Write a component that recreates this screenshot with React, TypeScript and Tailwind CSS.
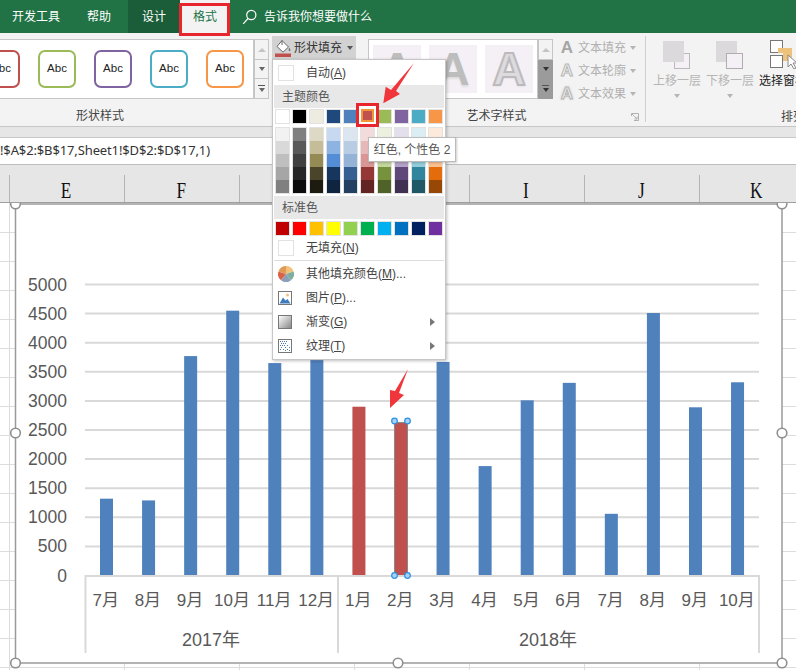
import React from "react";

const themeTop = ["#ffffff", "#000000", "#eeece1", "#1f497d", "#4f81bd", "#c0504d", "#9bbb59", "#8064a2", "#4bacc6", "#f79646"];
const tints = [
  ["#f2f2f2", "#d9d9d9", "#bfbfbf", "#a6a6a6", "#808080"],
  ["#7f7f7f", "#595959", "#404040", "#262626", "#0d0d0d"],
  ["#ddd9c4", "#c4bd97", "#948a54", "#4a452a", "#1d1b10"],
  ["#c6d9f0", "#8db3e2", "#538dd5", "#17365d", "#0f243e"],
  ["#dce6f1", "#b8cce4", "#95b3d7", "#366092", "#244061"],
  ["#f2dcdb", "#e6b8b7", "#d99694", "#953735", "#632523"],
  ["#ebf1de", "#d8e4bc", "#c3d69b", "#76923c", "#4f6228"],
  ["#e4dfec", "#ccc1da", "#b3a2c7", "#5f497a", "#3f3151"],
  ["#daeef3", "#b7dee8", "#92cddc", "#31859c", "#205867"],
  ["#fdeada", "#fbd5b5", "#fac08f", "#e46c0a", "#974806"],
];
const standard = ["#c00000", "#ff0000", "#ffc000", "#ffff00", "#92d050", "#00b050", "#00b0f0", "#0070c0", "#002060", "#7030a0"];
const shapeColors = ["#c0504d", "#9bbb59", "#8064a2", "#4bacc6", "#f79646"];
const values = [1320, 1290, 3770, 4550, 3650, 3700, 2900, 2630, 3670, 1880, 3010, 3310, 1060, 4510, 2890, 3320];
const cats = ["7月", "8月", "9月", "10月", "11月", "12月", "1月", "2月", "3月", "4月", "5月", "6月", "7月", "8月", "9月", "10月"];
const ticks = [0, 500, 1000, 1500, 2000, 2500, 3000, 3500, 4000, 4500, 5000];
const rowLines = Array.from({ length: 16 }, (_, i) => 232 + i * 29);
const colLines = [124.5, 239.5, 354.5, 469.5, 584.5, 699.5];
const handles: [number, number][] = [[15.5, 204], [782, 204], [15.5, 433], [782, 433], [15.5, 663], [398, 663], [782, 663]];
const yOf = (v: number) => 575.5 - (v / 5000) * 291;

function Caret({ className }: { className: string }) {
  return <span className={`inline-block w-0 h-0 border-x-[3.5px] border-x-transparent border-t-[4px] ${className}`} />;
}

function ScrollButtons({ dark }: { dark?: boolean }) {
  const lower = dark ? "bg-[#9b9b9b] border-[#9b9b9b]" : "bg-[#f3f3f3] border-[#c6c6c6]";
  const mark = dark ? "border-t-[#333333]" : "border-t-[#666666]";
  return (
    <div className="w-[15px] h-[60px] flex flex-col">
      <div className="h-[21px] bg-[#f3f3f3] border border-[#c6c6c6] flex items-center justify-center">
        <span className="inline-block w-0 h-0 border-x-[4px] border-x-transparent border-b-[4px] border-b-[#c4c4c4]" />
      </div>
      <div className={`h-[19px] border-x border-b flex items-center justify-center ${lower}`}>
        <Caret className={mark} />
      </div>
      <div className={`h-[20px] border-x border-b flex flex-col items-center justify-center gap-[2px] ${lower}`}>
        <span className="w-[7px] h-px bg-[#555555]" />
        <Caret className={mark} />
      </div>
    </div>
  );
}

function TextOption({ label, kind }: { label: string; kind: number }) {
  const icon =
    kind === 0
      ? "text-[#a6a6a6]"
      : kind === 1
      ? "text-[#f3f3f3] [-webkit-text-stroke:1px_#b5b5b5]"
      : "text-[#ededed] [-webkit-text-stroke:1px_#b5b5b5] [text-shadow:0_0_3px_#bbbbbb]";
  return (
    <div className="h-[23px] flex items-center">
      <span className={`w-[14px] text-center text-[17px] leading-none font-bold font-['Liberation_Sans',sans-serif] ${icon}`}>A</span>
      <span className="ml-[4px] text-[12px] text-[#b0b0b0]">{label}</span>
      <Caret className="ml-[4px] border-t-[#b5b5b5]" />
    </div>
  );
}

function MenuRow({ icon, arrow, children }: { icon: React.ReactNode; arrow?: boolean; children: React.ReactNode }) {
  return (
    <div className="h-[24px] flex items-center relative">
      <span className="w-[32px] flex justify-start pl-[4px]">{icon}</span>
      <span className="text-[12px] text-[#444444]">{children}</span>
      {arrow && <span className="absolute right-[9px] top-[8px] w-0 h-0 border-y-[4px] border-y-transparent border-l-[5px] border-l-[#777777]" />}
    </div>
  );
}

function Swatch({ c }: { c: string }) {
  return <span className="block w-[15px] h-[15px] border border-[#e2e2e2]" style={{ background: c }} />;
}

export default function App() {
  return (
    <div className="w-[796px] h-[670px] overflow-hidden relative flex flex-col bg-white font-['Liberation_Sans','Noto_Sans_CJK_SC',sans-serif]">
      {/* Title tabs */}
      <div className="h-[33px] shrink-0 bg-[#217346] flex items-center text-[12px] text-white">
        <span className="ml-[12px]">开发工具</span>
        <span className="ml-[27px]">帮助</span>
        <span className="ml-[17px] w-[52px] h-[33px] bg-[#1b5d38] flex items-center justify-center">设计</span>
        <span className="w-[50px] h-[33px] bg-[#f3f3f3] text-[#217346] flex items-center justify-center">格式</span>
        <svg className="ml-[12px]" width="15" height="16" viewBox="0 0 15 16" fill="none" stroke="#ffffff" strokeWidth="1.2">
          <circle cx="9.3" cy="6" r="4.6" />
          <path d="M6 9.5 1.2 14.8" />
        </svg>
        <span className="ml-[7px] text-[#ffffff]">告诉我你想要做什么</span>
      </div>

      {/* Ribbon */}
      <div className="h-[94px] shrink-0 bg-[#f3f3f3] border-b border-[#c6c6c6] flex overflow-hidden">
        <div className="w-[272px] shrink-0 flex flex-col pt-[6px]">
          <div className="flex h-[60px] w-[269px]">
            <div className="w-[254px] bg-white border-y border-r border-[#c6c6c6] overflow-hidden flex items-center gap-[18px] pl-0">
              {shapeColors.map((c, i) => (
                <div
                  key={c}
                  className={`w-[38px] h-[38px] shrink-0 rounded-[7px] border-2 bg-white flex items-center justify-center text-[11.5px] text-[#222222] ${i === 0 ? "ml-[-18px]" : ""}`}
                  style={{ borderColor: c }}
                >
                  Abc
                </div>
              ))}
            </div>
            <ScrollButtons />
          </div>
          <div className="h-[27px] pt-[7px] flex items-center justify-center text-[12px] text-[#444444] pr-[72px]">形状样式</div>
        </div>

        <div className="w-[96px] shrink-0 pt-[3px]">
          <div className="w-[84px] h-[24px] bg-[#d2d2d2] flex items-center pl-[3px]">
            <svg width="17" height="18" viewBox="0 0 17 18">
              <path d="M7 1.5 13.5 8 8 13.2 2 7.5Z" fill="#ffffff" stroke="#666666" strokeWidth="1" />
              <path d="M7 1.5V6" stroke="#666666" fill="none" />
              <path d="M14 8.5c1.3 1.6 1.8 2.6 1.300 3.300-.6.6-1.600.2-1.700-.8Z" fill="#777777" />
              <rect x="0" y="14.5" width="16" height="3.5" fill="#c0504d" />
            </svg>
            <span className="ml-[2px] text-[12px] text-[#333333]">形状填充</span>
            <Caret className="ml-[5px] border-t-[#555555]" />
          </div>
        </div>

        <div className="w-[185px] shrink-0 flex flex-col pt-[6px]">
          <div className="flex h-[60px]">
            <div className="w-[170px] bg-white border border-[#c6c6c6] flex items-center gap-[8px] pl-[4px]">
              {[0, 1, 2].map((i) => (
                <div key={i} className="w-[48px] h-[48px] bg-[#f4f0f6] flex items-center justify-center overflow-hidden">
                  <span
                    className={`text-[46px] leading-none font-bold ${
                      i === 2
                        ? "text-[#dedbde] [-webkit-text-stroke:2px_#bdbabd] [text-shadow:0_1px_2px_#cccccc]"
                        : "text-[#bdbdbd] [text-shadow:0_2px_2px_#dddddd]"
                    }`}
                  >
                    A
                  </span>
                </div>
              ))}
            </div>
            <ScrollButtons dark />
          </div>
          <div className="h-[27px] pt-[7px] flex items-center justify-center text-[12px] text-[#444444] pl-[72px]">艺术字样式</div>
        </div>

        <div className="w-[93px] shrink-0 border-r border-[#cfcfcf] mt-[3px] mb-[4px] pl-[7px] relative">
          <TextOption label="文本填充" kind={0} />
          <TextOption label="文本轮廓" kind={1} />
          <TextOption label="文本效果" kind={2} />
          <svg className="absolute right-[6px] bottom-[1px]" width="8" height="8" viewBox="0 0 8 8" fill="none" stroke="#b0b0b0">
            <path d="M.5 3V.5H7.5V7.5H3" />
            <path d="M1 1 6 6M3.500 6H6V3.500" />
          </svg>
        </div>

        <div className="flex pl-[7px] gap-[5px] pt-[8px] min-w-0">
          <div className="w-[48px] flex flex-col items-center text-[12px] text-[#b5b5b5]">
            <svg width="28" height="28" viewBox="0 0 28 28" className="shrink-0">
              <rect x="11.5" y="12.5" width="15" height="15" fill="#f4f0f6" stroke="#bdb8bd" />
              <rect x="0" y="0" width="21" height="21" fill="#dcd9dc" />
            </svg>
            <span className="mt-[3px] whitespace-nowrap leading-[18px]">上移一层</span>
            <Caret className="mt-[4px] border-t-[#b5b5b5]" />
          </div>
          <div className="w-[48px] flex flex-col items-center text-[12px] text-[#b5b5b5]">
            <svg width="28" height="28" viewBox="0 0 28 28" className="shrink-0">
              <rect x="0" y="0" width="21" height="21" fill="#dcd9dc" />
              <rect x="10.5" y="12.5" width="16" height="15" fill="#f4f0f6" stroke="#b0acb0" />
            </svg>
            <span className="mt-[3px] whitespace-nowrap leading-[18px]">下移一层</span>
            <Caret className="mt-[4px] border-t-[#b5b5b5]" />
          </div>
          <div className="w-[48px] flex flex-col items-start text-[12px] text-[#222222] relative">
            <svg width="36" height="29" viewBox="0 0 36 29" className="shrink-0 ml-[10px] mt-[-1px]">
              <rect x="1.5" y="0.5" width="12" height="12" fill="#ffffff" stroke="#777777" />
              <rect x="1.5" y="15.5" width="12" height="12" fill="#ffffff" stroke="#777777" />
              <rect x="9" y="8" width="14" height="5" fill="#ecc27c" />
              <rect x="14" y="8" width="9" height="13" fill="#ecc27c" />
              <path d="M19 15v12l3-3 3 5 2-1-3-5h4Z" fill="#ffffff" stroke="#888888" />
            </svg>
            <span className="mt-[3px] whitespace-nowrap leading-[18px]">选择窗格</span>
            <span className="absolute left-[22px] top-[67px] whitespace-nowrap text-[#444444]">排列</span>
          </div>
        </div>
      </div>

      {/* Formula bar */}
      <div className="h-[38px] shrink-0 bg-[#e6e6e6] pt-[10px] border-b border-[#bdbdbd]">
        <div className="h-[27px] bg-white border-t border-[#c8c8c8] flex items-center text-[13px] tracking-[-0.13px] text-[#333333] font-['Noto_Sans',sans-serif] whitespace-nowrap">
          !$A$2:$B$17,Sheet1!$D$2:$D$17,1)
        </div>
      </div>

      {/* Column headers */}
      <div className="h-[38px] shrink-0 bg-[#e6e6e6] border-b border-[#9f9f9f] flex pt-[10px] font-['Liberation_Serif',serif] text-[23px] text-[#111111]">
        <div className="w-[9px] shrink-0" />
        {["E", "F", "G", "H", "I", "J", "K"].map((c) => (
          <div key={c} className="w-[115px] shrink-0 border-l border-[#b5b5b5] flex items-center justify-center leading-none pt-[3px] pr-[2px]">
            <span className="scale-x-[0.75]">{c}</span>
          </div>
        ))}
      </div>

      {/* Sheet with chart */}
      <div className="flex-1 min-h-0 overflow-hidden">
        <svg width="796" height="467" viewBox="0 203 796 467" className="block font-['Liberation_Sans','Noto_Sans_CJK_SC',sans-serif]">
          {rowLines.map((y) => (
            <line key={y} x1="0" x2="796" y1={y + 0.5} y2={y + 0.5} stroke="#dcdcdc" />
          ))}
          <line x1="9.5" x2="9.5" y1="203" y2="670" stroke="#dcdcdc" />
          {colLines.map((x) => (
            <line key={x} x1={x} x2={x} y1="203" y2="670" stroke="#dcdcdc" />
          ))}
          <rect x="15.5" y="204" width="766.5" height="459" fill="#ffffff" stroke="#9a9a9a" strokeWidth="1.5" />

          {ticks.slice(1).map((t) => (
            <line key={t} x1="85" x2="759" y1={yOf(t)} y2={yOf(t)} stroke="#d9d9d9" strokeWidth="2" />
          ))}
          {ticks.map((t) => (
            <text key={t} x="67" y={yOf(t) + 6} textAnchor="end" fontSize="17.5" fill="#595959">
              {t}
            </text>
          ))}
          {values.map((v, i) => (
            <rect
              key={i}
              x={100 + i * 42.07}
              y={yOf(v)}
              width="13"
              height={575.5 - yOf(v)}
              fill={i === 6 || i === 7 ? "#c0504d" : "#4f81bd"}
              stroke={i === 7 ? "#8a8a8a" : "none"}
            />
          ))}
          <line x1="85" x2="760" y1="576" y2="576" stroke="#d9d9d9" strokeWidth="2" />
          {[85.5, 338, 759].map((x) => (
            <line key={x} x1={x} x2={x} y1="575" y2="653" stroke="#d9d9d9" strokeWidth="2" />
          ))}
          {cats.map((c, i) => (
            <text key={i} x={105.8 + i * 42.07} y="606" textAnchor="middle" fontSize="17" fill="#595959">
              {c}
            </text>
          ))}
          <text x="211" y="646" textAnchor="middle" fontSize="18" fill="#595959">
            2017年
          </text>
          <text x="548" y="646" textAnchor="middle" fontSize="18" fill="#595959">
            2018年
          </text>

          {[[394.5, 421], [407.5, 421], [394.5, 575.5], [407.5, 575.5]].map(([x, y]) => (
            <circle key={`${x}-${y}`} cx={x} cy={y} r="2.8" fill="#a6d3f5" stroke="#2e8fe0" strokeWidth="1.2" />
          ))}
          {handles.map(([x, y]) => (
            <circle key={`${x}-${y}`} cx={x} cy={y} r="4.8" fill="#ffffff" stroke="#8f8f8f" strokeWidth="1.6" />
          ))}
        </svg>
      </div>

      {/* Active tab highlight */}
      <div className="absolute left-[179px] top-[3px] w-[51px] h-[33px] border-[3px] border-[#e8262d]" />

      {/* Dropdown */}
      <div className="absolute left-[272px] top-[59px] w-[174px] h-[301px] bg-white border border-[#c6c6c6] shadow-[1px_1px_3px_rgba(0,0,0,0.25)] px-[1px] pt-[1px]">
        <MenuRow icon={<span className="block w-[16px] h-[16px] border border-[#e2e2e2] bg-white" />}>
          自动(<u>A</u>)
        </MenuRow>
        <div className="h-[23px] bg-[#e8e8e8] flex items-center pl-[8px] text-[12px] text-[#555555]">主题颜色</div>
        <div className="flex gap-[2px] pl-[1px] mt-[1px]">
          {themeTop.map((c) => (
            <Swatch key={c} c={c} />
          ))}
        </div>
        <div className="flex gap-[2px] pl-[1px] mt-[3px]">
          {tints.map((col, i) => (
            <div key={i} className="w-[15px] border border-[#e2e2e2] flex flex-col">
              {col.map((c) => (
                <span key={c} className="block h-[13px]" style={{ background: c }} />
              ))}
            </div>
          ))}
        </div>
        <div className="h-[23px] mt-[2px] bg-[#e8e8e8] flex items-center pl-[8px] text-[12px] text-[#555555]">标准色</div>
        <div className="flex gap-[2px] pl-[1px] mt-[2px]">
          {standard.map((c) => (
            <Swatch key={c} c={c} />
          ))}
        </div>
        <MenuRow icon={<span className="block w-[16px] h-[16px] border border-[#e2e2e2] bg-white" />}>
          无填充(<u>N</u>)
        </MenuRow>
        <div className="h-px bg-[#dddddd] mb-[1px]" />
        <MenuRow
          icon={
            <svg width="16" height="16" viewBox="0 0 16 16">
              <path d="M8 8 8 0A8 8 0 0 1 15.5 5.5Z" fill="#f0c27a" />
              <path d="M8 8 15.5 5.5A8 8 0 0 1 13 14.3Z" fill="#7fae9e" />
              <path d="M8 8 13 14.3A8 8 0 0 1 3 14.3Z" fill="#8aa0b8" />
              <path d="M8 8 3 14.3A8 8 0 0 1 .5 5.5Z" fill="#d9634a" />
              <path d="M8 8 .5 5.5A8 8 0 0 1 8 0Z" fill="#e09a55" />
            </svg>
          }
        >
          其他填充颜色(<u>M</u>)...
        </MenuRow>
        <MenuRow
          icon={
            <svg width="14" height="14" viewBox="0 0 14 14">
              <rect x=".5" y=".5" width="13" height="13" fill="#ffffff" stroke="#777777" />
              <circle cx="9.5" cy="4" r="1.5" fill="#f0c27a" />
              <path d="M1.500 12.500 5 6.500l2.500 3 2-1.500 3 4.500Z" fill="#3f7cbf" />
            </svg>
          }
        >
          图片(<u>P</u>)...
        </MenuRow>
        <MenuRow icon={<span className="block w-[14px] h-[14px] border border-[#777777] bg-gradient-to-br from-white to-[#8a8a8a]" />} arrow>
          渐变(<u>G</u>)
        </MenuRow>
        <MenuRow
          icon={
            <svg width="14" height="14" viewBox="0 0 14 14">
              <rect x=".5" y=".5" width="13" height="13" fill="#ffffff" stroke="#777777" />
              <path
                d="M2 2h1v1H2zM4 2h1v1H4zM6 2h1v1H6zM8 2h1v1H8zM3 4h1v1H3zM5 4h1v1H5zM7 4h1v1H7zM2 6h1v1H2zM4 6h1v1H4zM6 6h1v1H6zM9 6h1v1H9zM3 8h1v1H3zM7 8h1v1H7zM11 8h1v1h-1zM2 10h1v1H2zM5 10h1v1H5zM9 10h1v1H9zM11 11h1v1h-1zM7 11h1v1H7z"
                fill="#4a79b0"
              />
            </svg>
          }
          arrow
        >
          纹理(<u>T</u>)
        </MenuRow>
      </div>

      {/* Selected swatch */}
      <div className="absolute left-[356px] top-[103px] w-[23px] h-[24px] border-[3px] border-[#e8262d] bg-white flex items-center justify-center">
        <span className="block w-[13px] h-[13px] bg-[#c0504d] border-2 border-[#f29536]" />
      </div>

      {/* Tooltip */}
      <div className="absolute left-[368px] top-[137px] w-[88px] h-[25px] bg-white border border-[#bbbbbb] shadow-[1px_1px_2px_rgba(0,0,0,0.2)] flex items-center justify-center text-[12px] text-[#555555] whitespace-nowrap">
        红色, 个性色 2
      </div>

      {/* Red arrows */}
      <svg className="absolute left-[380px] top-[60px]" width="40" height="48" viewBox="380 60 40 48">
        <polygon points="414,63 396,91 400,94 383.300,103.300 385.700,86.700 391,90" fill="#f0363a" />
      </svg>
      <svg className="absolute left-[385px] top-[365px]" width="28" height="48" viewBox="385 365 28 48">
        <polygon points="408,369 399,393 404,395 390,408 390,390 395,391" fill="#f0363a" />
      </svg>
    </div>
  );
}
